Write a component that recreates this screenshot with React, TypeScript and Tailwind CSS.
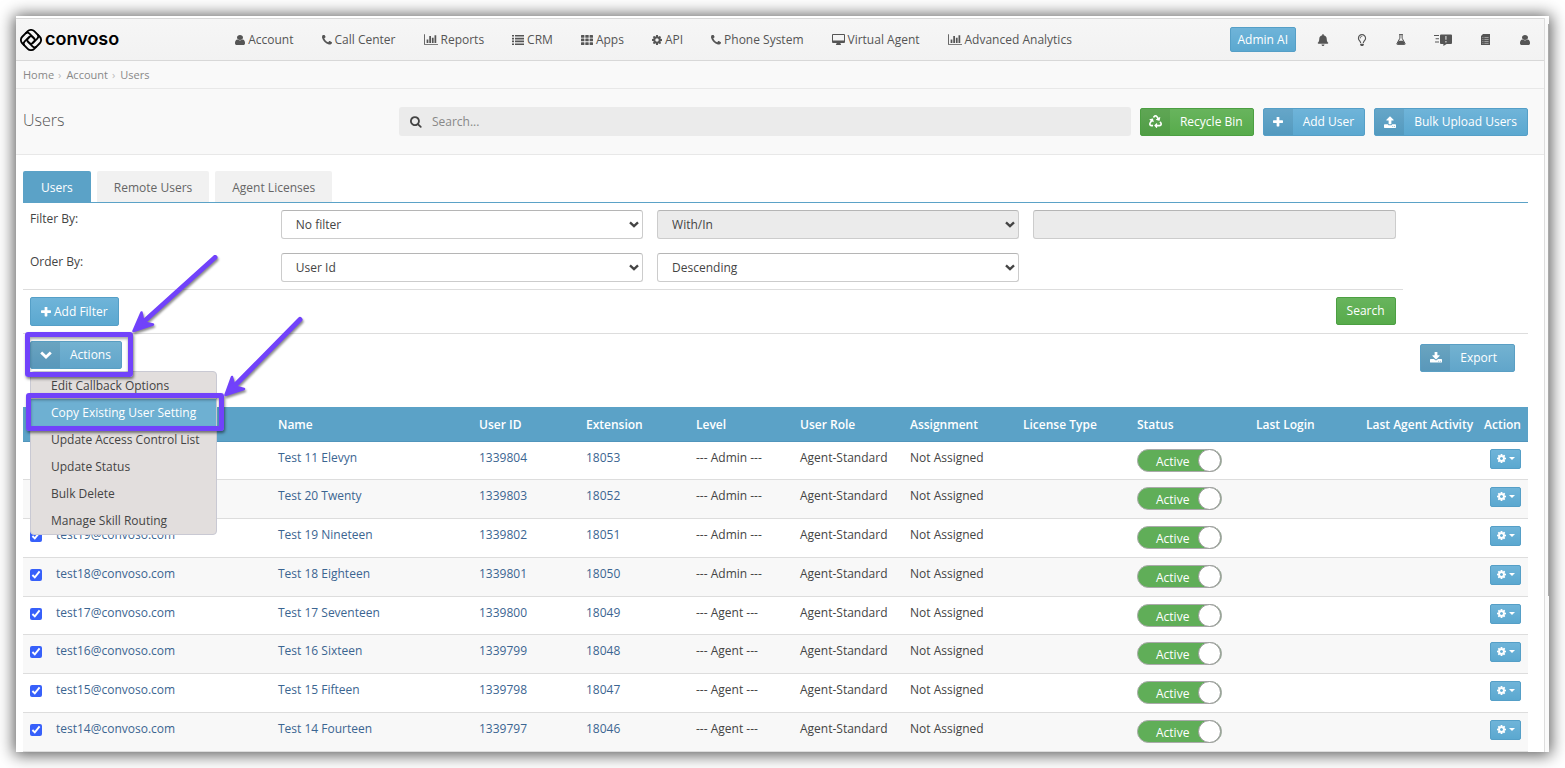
import type { ReactNode } from "react"
import { FaBell, FaRecycle, FaRegLightbulb } from "react-icons/fa"
import clsx from "clsx"

type IconProps = { className?: string }

const UserIcon = ({ className = "w-[10px] h-[10px]" }: IconProps) => (
    <svg viewBox="256 128 1280 1536" preserveAspectRatio="none" fill="currentColor" className={className}>
        <path d="M1536 1399q0 109-62.5 187t-150.5 78h-854q-88 0-150.5-78t-62.5-187q0-85 8.5-160.5t31.5-152 58.5-131 94-89 134.5-34.5q131 128 313 128t313-128q76 0 134.5 34.5t94 89 58.5 131 31.5 152 8.5 160.5zm-256-887q0 159-112.5 271.5t-271.5 112.5-271.5-112.5-112.5-271.5 112.5-271.5 271.5-112.5 271.5 112.5 112.5 271.5z" />
    </svg>
)

const PhoneIcon = () => (
    <svg viewBox="192 192 1408 1408" fill="currentColor" className="size-[10px]">
        <path d="M1600 1240q0 27-10 70.5t-21 68.5q-21 50-122 106-94 51-186 51-27 0-52.5-3.5t-57.5-12.5-47.5-14.5-55.5-20.5-49-18q-98-35-175-83-128-79-264.5-215.5t-215.5-264.5q-48-77-83-175-3-9-18-49t-20.5-55.5-14.5-47.5-12.5-57.5-3.5-52.5q0-92 51-186 56-101 106-122 25-11 68.5-21t70.5-10q14 0 21 3 18 6 53 76 11 19 30 54t35 63.5 31 53.5q3 4 17.5 25t21.5 35.5 7 28.5q0 20-28.5 50t-62 55-62 53-28.5 46q0 9 5 22.5t8.5 20.5 14 24 11.5 19q76 137 174 235t235 174q2 1 19 11.5t24 14 20.5 8.5 22.5 5q18 0 46-28.5t53-62 55-62 50-28.5q14 0 28.5 7t35.5 21.5 25 17.5q25 15 53.5 31t63.5 35 54 30q70 35 76 53 3 7 3 21z" />
    </svg>
)

const ChartIcon = () => (
    <svg viewBox="0 128 2048 1536" fill="currentColor" className="w-[14px] h-[11px]">
        <path d="M640 896v512h-256v-512h256zm384-512v1024h-256v-1024h256zm1024 1152v128h-2048v-1536h128v1408h1920zm-640-896v768h-256v-768h256zm384-384v1152h-256v-1152h256z" />
    </svg>
)

const ListIcon = () => (
    <svg viewBox="0 0 12 10" fill="currentColor" className="w-[12px] h-[10px]">
        <path d="M0 0h2v1.6h-2zM3 0h9v1.6h-9zM0 2.8h2v1.6h-2zM3 2.8h9v1.6h-9zM0 5.6h2v1.6h-2zM3 5.6h9v1.6h-9zM0 8.4h2v1.6h-2zM3 8.4h9v1.6h-9z" />
    </svg>
)

const GridIcon = () => (
    <svg viewBox="0 0 12 10" fill="currentColor" className="w-[12px] h-[10px]">
        {[0, 3.6, 7.2].map((y) =>
            [0, 4.3, 8.6].map((x) => <rect key={`${x}-${y}`} x={x} y={y} width="3.4" height="2.7" rx="0.5" />)
        )}
    </svg>
)

const CogIcon = ({ className = "size-[10px]" }: IconProps) => (
    <svg viewBox="128 128 1536 1536" fill="currentColor" className={className}>
        <path d="M1152 896q0-106-75-181t-181-75-181 75-75 181 75 181 181 75 181-75 75-181zm512-109v222q0 12-8 23t-20 13l-185 28q-19 54-39 91 35 50 107 138 10 12 10 25t-9 23q-27 37-99 108t-94 71q-12 0-26-9l-138-108q-44 23-91 38-16 136-29 186-7 28-36 28h-222q-14 0-24.5-8.5t-11.5-21.5l-28-184q-49-16-90-37l-141 107q-10 9-25 9-14 0-25-11-126-114-165-168-7-10-7-23 0-12 8-23 15-21 51-66.5t54-70.5q-27-50-41-99l-183-27q-13-2-21-12.5t-8-23.5v-222q0-12 8-23t19-13l186-28q14-46 39-92-40-57-107-138-10-12-10-24 0-10 9-23 26-36 98.5-107.5t94.5-71.5q13 0 26 10l138 107q44-23 91-38 16-136 29-186 7-28 36-28h222q14 0 24.5 8.5t11.5 21.5l28 184q49 16 90 37l142-107q9-9 24-9 13 0 25 10 129 119 165 170 7 8 7 22 0 12-8 23-15 21-51 66.5t-54 70.5q26 50 41 98l183 28q13 2 21 12.5t8 23.5z" />
    </svg>
)

const DesktopIcon = () => (
    <svg viewBox="0 0 13 11" fill="currentColor" className="w-[13px] h-[11px]">
        <path fillRule="evenodd" d="M1 0h11a1 1 0 0 1 1 1v7a1 1 0 0 1-1 1H8.5v1q.6.2.6 1H3.9q0-.8.6-1V9H1a1 1 0 0 1-1-1V1a1 1 0 0 1 1-1zM1 1v5.4h11V1z" />
    </svg>
)

const SearchIcon = () => (
    <svg viewBox="64 128 1664 1664" fill="currentColor" className="size-3">
        <path d="M1216 832q0-185-131.5-316.5t-316.5-131.5-316.5 131.5-131.5 316.5 131.5 316.5 316.5 131.5 316.5-131.5 131.5-316.5zm512 832q0 52-38 90t-90 38q-54 0-90-38l-343-342q-179 124-399 124-143 0-273.5-55.5t-225-150-150-225-55.5-273.5 55.5-273.5 150-225 225-150 273.5-55.5 273.5 55.5 225 150 150 225 55.5 273.5q0 220-124 399l343 343q37 37 37 90z" />
    </svg>
)

const PlusIcon = () => (
    <svg viewBox="192 192 1408 1408" fill="currentColor" className="size-[10px]">
        <path d="M1600 736v192q0 40-28 68t-68 28h-416v416q0 40-28 68t-68 28h-192q-40 0-68-28t-28-68v-416h-416q-40 0-68-28t-28-68v-192q0-40 28-68t68-28h416v-416q0-40 28-68t68-28h192q40 0 68 28t28 68v416h416q40 0 68 28t28 68z" />
    </svg>
)

const UploadIcon = () => (
    <svg viewBox="64 0 1664 1664" fill="currentColor" className="size-3">
        <path d="M1344 1472q0-26-19-45t-45-19-45 19-19 45 19 45 45 19 45-19 19-45zm256 0q0-26-19-45t-45-19-45 19-19 45 19 45 45 19 45-19 19-45zm128-224v320q0 40-28 68t-68 28h-1472q-40 0-68-28t-28-68v-320q0-40 28-68t68-28h427q21 56 70.5 92t110.5 36h256q61 0 110.5-36t70.5-92h427q40 0 68 28t28 68zm-325-648q-17 40-59 40h-256v448q0 26-19 45t-45 19h-256q-26 0-45-19t-19-45v-448h-256q-42 0-59-40-17-39 14-69l448-448q18-19 45-19t45 19l448 448q31 30 14 69z" />
    </svg>
)

const DownloadIcon = () => (
    <svg viewBox="64 128 1664 1536" fill="currentColor" className="size-3">
        <path d="M1344 1344q0-26-19-45t-45-19-45 19-19 45 19 45 45 19 45-19 19-45zm256 0q0-26-19-45t-45-19-45 19-19 45 19 45 45 19 45-19 19-45zm128-224v320q0 40-28 68t-68 28h-1472q-40 0-68-28t-28-68v-320q0-40 28-68t68-28h465l135 136q58 56 136 56t136-56l136-136h464q40 0 68 28t28 68zm-325-569q17 41-14 70l-448 448q-18 19-45 19t-45-19l-448-448q-31-29-14-70 17-39 59-39h256v-448q0-26 19-45t45-19h256q26 0 45 19t19 45v448h256q42 0 59 39z" />
    </svg>
)

const ChevronIcon = ({ className = "w-3 h-2" }: IconProps) => (
    <svg viewBox="0 0 12 8" fill="none" stroke="currentColor" strokeWidth="2.8" className={className}>
        <path d="M1.2 1.4 6 6l4.8-4.6" />
    </svg>
)

const FlaskIcon = () => (
    <svg viewBox="0 0 10 11" className="w-[10px] h-[11px]">
        <path d="M3.1.6h3.8M3.9.6v3.6L.9 9.6q-.3.8.6.8h7q.9 0 .6-.8L6.1 4.2V.6" fill="none" stroke="currentColor" />
        <path d="M2.6 6.8h4.8l1.6 3.4H1z" fill="currentColor" />
    </svg>
)

const FeedbackIcon = () => (
    <svg viewBox="0 0 18 12" className="w-[18px] h-[12px]">
        <path d="M0 1.5h5M1.6 4.7h3.4M1 8h4" stroke="currentColor" strokeWidth="1.1" />
        <path d="M7 .5h10q1 0 1 1v7.4q0 1-1 1h-4.4L9.4 12V9.9H7q-1 0-1-1V1.5q0-1 1-1z" fill="currentColor" />
        <path d="M11.900 2v3.800M11.900 7v1.500" stroke="#bbb" strokeWidth="1.500" />
    </svg>
)

const NotesIcon = () => (
    <svg viewBox="0 0 9 11" className="w-[9px] h-[11px]">
        <path d="M2 0h7v11H0V2z" fill="currentColor" />
        <path d="M1.400 3.500h1M1.400 5.500h1M1.400 7.500h1M1.400 9.400h1M3.400 3.500h4.200M3.400 5.500h4.200M3.400 7.500h4.200M3.400 9.400h4.200" stroke="#bbb" strokeWidth="0.7" />
    </svg>
)

const Logo = () => (
    <a href="#" className="flex items-center gap-[3px] text-black">
        <svg viewBox="-11 -11 22 22" fill="none" stroke="currentColor" strokeWidth="1.800" strokeLinecap="round" className="size-[22px]">
            <rect x="-8.500" y="-8.500" width="17" height="17" rx="4.600" transform="rotate(45)" />
            {[45, 135, 225, 315].map((angle) => (
                <path key={angle} d="M-8.500-1.200Q-8-3.400-5.500-3.400H1q2.200 0 2.200 2.200V1" transform={`rotate(${angle})`} />
            ))}
        </svg>
        <span className="pb-[2px] font-['Inter',sans-serif] text-lg leading-6 font-semibold">convoso</span>
    </a>
)

const navItems = [
    { label: "Account", icon: <UserIcon /> },
    { label: "Call Center", icon: <PhoneIcon /> },
    { label: "Reports", icon: <ChartIcon /> },
    { label: "CRM", icon: <ListIcon /> },
    { label: "Apps", icon: <GridIcon /> },
    { label: "API", icon: <CogIcon /> },
    { label: "Phone System", icon: <PhoneIcon /> },
    { label: "Virtual Agent", icon: <DesktopIcon /> },
    { label: "Advanced Analytics", icon: <ChartIcon /> },
]

const toolItems = [
    { label: "Notifications", icon: <FaBell className="size-3" /> },
    { label: "Tips", icon: <FaRegLightbulb className="size-3" /> },
    { label: "Labs", icon: <FlaskIcon /> },
    { label: "Feedback", icon: <FeedbackIcon />, wide: true },
    { label: "Notes", icon: <NotesIcon /> },
    { label: "Profile", icon: <UserIcon /> },
]

const actionItems = [
    "Edit Callback Options",
    "Copy Existing User Setting",
    "Update Access Control List",
    "Update Status",
    "Bulk Delete",
    "Manage Skill Routing",
]

const users = [
    { email: "", name: "Test 11 Elevyn", id: "1339804", ext: "18053", level: "Admin" },
    { email: "", name: "Test 20 Twenty", id: "1339803", ext: "18052", level: "Admin" },
    { email: "test19@convoso.com", name: "Test 19 Nineteen", id: "1339802", ext: "18051", level: "Admin" },
    { email: "test18@convoso.com", name: "Test 18 Eighteen", id: "1339801", ext: "18050", level: "Admin" },
    { email: "test17@convoso.com", name: "Test 17 Seventeen", id: "1339800", ext: "18049", level: "Agent" },
    { email: "test16@convoso.com", name: "Test 16 Sixteen", id: "1339799", ext: "18048", level: "Agent" },
    { email: "test15@convoso.com", name: "Test 15 Fifteen", id: "1339798", ext: "18047", level: "Agent" },
    { email: "test14@convoso.com", name: "Test 14 Fourteen", id: "1339797", ext: "18046", level: "Agent" },
]

const headings = [
    "Name",
    "User ID",
    "Extension",
    "Level",
    "User Role",
    "Assignment",
    "License Type",
    "Status",
    "Last Login",
    "Last Agent Activity",
    "Action",
]

const blue = "border-[#559fc7] bg-linear-to-b from-[#6fb4d9] to-[#5ba8d0]"
const mutedBlue = "border-[#5a9fc4] bg-linear-to-b from-[#73b2d1] to-[#61a5ca]"
const green = "border-[#4c9f42] bg-linear-to-b from-[#68b45d] to-[#57ab4b]"

function LabeledButton({ icon, tone, className = "pr-[10px]", children }: {
    icon: ReactNode
    tone: string
    className?: string
    children: ReactNode
}) {
    return (
        <button className={clsx("flex h-7 items-stretch rounded-xs border text-white", tone, className)}>
            <span className="mr-[10px] flex w-[29px] items-center justify-center bg-black/8">{icon}</span>
            <span className="self-center whitespace-nowrap">{children}</span>
        </button>
    )
}

function SelectBox({ label, value, disabled }: { label: string; value: string; disabled?: boolean }) {
    return (
        <div className="relative col-span-3 mx-[7px]">
            <select
                aria-label={label}
                disabled={disabled}
                className={clsx(
                    "block h-[29px] w-full appearance-none rounded-[3px] border border-[#ccc] border-t-[#b5b5b5] px-[14px] text-[#444] opacity-100",
                    disabled ? "bg-[#ebebeb]" : "bg-white"
                )}
            >
                <option>{value}</option>
            </select>
            <ChevronIcon className="pointer-events-none absolute top-[11px] right-1 h-[7px] w-[10px] text-[#444]" />
        </div>
    )
}

function Header() {
    return (
        <header className="flex h-[43px] items-center border-y border-[#d8d8d8] bg-linear-to-b from-[#f6f6f6] to-[#f2f2f2] pl-1 text-[#555]">
            <Logo />
            <nav className="ml-[116px] flex gap-7">
                {navItems.map((item) => (
                    <a key={item.label} href="#" className="flex items-center gap-[3px] whitespace-nowrap">
                        {item.icon}
                        {item.label}
                    </a>
                ))}
            </nav>
            <button className={clsx("mr-[7px] ml-auto h-[25px] rounded-xs border px-[7px] text-white", blue)}>
                Admin AI
            </button>
            <div className="flex">
                {toolItems.map((item) => (
                    <button
                        key={item.label}
                        aria-label={item.label}
                        className={clsx("flex items-center justify-center", item.wide ? "w-[46px]" : "w-[39px]")}
                    >
                        {item.icon}
                    </button>
                ))}
            </div>
        </header>
    )
}

function PageTitle() {
    return (
        <div className="flex items-center gap-[9px] border-b border-[#e8e8e8] bg-[#f9f9f9] py-[18px] pr-4 pl-[7px]">
            <h1 className="-mr-[9px] w-1/4 pb-1 text-base leading-6 font-light text-[#555]">Users</h1>
            <label className="flex h-[29px] flex-1 items-center gap-[10px] rounded-[3px] bg-[#ebebeb] px-[11px] text-[#444]">
                <SearchIcon />
                <input
                    aria-label="Search"
                    placeholder="Search..."
                    className="w-full bg-transparent outline-none placeholder:text-[#888]"
                />
            </label>
            <LabeledButton tone={green} icon={<FaRecycle className="size-[13px]" />}>Recycle Bin</LabeledButton>
            <LabeledButton tone={blue} icon={<PlusIcon />}>Add User</LabeledButton>
            <LabeledButton tone={blue} icon={<UploadIcon />}>Bulk Upload Users</LabeledButton>
        </div>
    )
}

function Tabs() {
    return (
        <div className="flex gap-[6px] border-b border-b-[#5ba2c7]">
            <button className="h-[31px] rounded-t-xs bg-[#5ba2c7] px-[18px] pt-[2px] font-medium text-white">Users</button>
            <button className="h-[31px] rounded-t-xs bg-[#f1f1f1] px-[17px] pt-[2px] text-[#666]">Remote Users</button>
            <button className="h-[31px] rounded-t-xs bg-[#f1f1f1] px-[17px] pt-[2px] text-[#666]">Agent Licenses</button>
        </div>
    )
}

function Filters() {
    return (
        <form className="border-b border-[#ddd]">
            <div className="w-11/12">
                <div className="grid grid-cols-11 gap-y-[14px] border-b border-[#ddd] py-[7px]">
                    <span className="col-span-2 pl-[7px]">Filter By:</span>
                    <SelectBox label="Filter By" value="No filter" />
                    <SelectBox label="Filter condition" value="With/In" disabled />
                    <input
                        aria-label="Filter value"
                        disabled
                        className="col-span-3 mx-[7px] h-[29px] min-w-0 rounded-[3px] border border-[#ccc] border-t-[#b5b5b5] bg-[#ebebeb]"
                    />
                    <span className="col-span-2 pl-[7px]">Order By:</span>
                    <SelectBox label="Order By" value="User Id" />
                    <SelectBox label="Order direction" value="Descending" />
                </div>
                <div className="flex justify-between p-[7px]">
                    <button type="button" className={clsx("flex h-[29px] items-center gap-[3px] rounded-xs border px-[10px] text-white", blue)}>
                        <PlusIcon />
                        Add Filter
                    </button>
                    <button type="button" className={clsx("h-7 rounded-xs border px-[10px] text-white", green)}>Search</button>
                </div>
            </div>
        </form>
    )
}

const arrowShadow = "drop-shadow-[1px_2px_1px_rgba(0,0,0,0.45)]"

function ActionsMenu() {
    return (
        <div className="relative">
            <LabeledButton tone={mutedBlue} icon={<ChevronIcon />}>Actions</LabeledButton>
            <div className="absolute top-[30px] left-0 z-10 w-[187px] rounded-sm border border-[#c9c9d3] bg-[#e2dedd]">
                <ul>
                    {actionItems.map((item) => (
                        <li key={item}>
                            <a
                                href="#"
                                className={clsx(
                                    "block h-[27px] pl-5 leading-[27px] whitespace-nowrap",
                                    item === "Copy Existing User Setting" ? "bg-[#6eb0d2] text-white" : "text-[#444]"
                                )}
                            >
                                {item}
                            </a>
                        </li>
                    ))}
                </ul>
            </div>

            {/* Callouts */}
            <div className="absolute -top-[9px] -left-[5px] z-20 h-[45px] w-[108px] rounded-[3px] border-[5px] border-[#7142fb] shadow-[1px_2px_3px_rgba(0,0,0,0.5),inset_0_2px_3px_rgba(0,0,0,0.35)]" />
            <div className="absolute top-[52px] -left-1 z-20 h-[38px] w-[198px] rounded-[3px] border-[5px] border-[#7142fb] shadow-[1px_2px_3px_rgba(0,0,0,0.5),inset_0_2px_3px_rgba(0,0,0,0.35)]" />
            <svg
                viewBox="0 0 190 160"
                className={clsx("pointer-events-none absolute -top-[91px] left-[95px] z-20 h-[160px] w-[190px]", arrowShadow)}
                fill="#7142fb"
                stroke="#7142fb"
                strokeLinejoin="round"
                strokeLinecap="round"
            >
                <path d="M90 7.500 14 76" strokeWidth="5" />
                <path d="M8.500 81 16.500 62.500 18.500 72.500 28 74.500z" strokeWidth="2.500" />
                <path d="M175 69.500 106 139.500" strokeWidth="5" />
                <path d="M100.500 145 107 127 109.500 136.500 119 139z" strokeWidth="2.500" />
            </svg>
        </div>
    )
}

function StatusToggle({ name }: { name: string }) {
    return (
        <label className="relative flex h-[23px] w-[85px] items-center rounded-full border border-[#aaa] bg-[#60ae58] pt-[3px] pl-[18px] text-white">
            <input type="checkbox" role="switch" defaultChecked aria-label={`Status of ${name}`} className="sr-only" />
            Active
            <span className="absolute top-0 right-0 size-[23px] -translate-y-px rounded-full border border-[#999] bg-white" />
        </label>
    )
}

function UsersTable() {
    return (
        <table className="w-full table-fixed text-left">
            <colgroup>
                <col className="w-[25px]" />
                <col className="w-[222px]" />
                <col className="w-[201px]" />
                <col className="w-[107px]" />
                <col className="w-[110px]" />
                <col className="w-[104px]" />
                <col className="w-[110px]" />
                <col className="w-[113px]" />
                <col className="w-[114px]" />
                <col className="w-[119px]" />
                <col className="w-[110px]" />
                <col className="w-[119px]" />
                <col className="w-[51px]" />
            </colgroup>
            <thead>
                <tr className="h-[34px] border-b border-[#5195bc] bg-[#5ba2c7] text-white">
                    <td />
                    <td />
                    {headings.map((heading) => (
                        <th key={heading} className="pt-[3px] pl-2 font-semibold whitespace-nowrap last:pl-[7px]">{heading}</th>
                    ))}
                </tr>
            </thead>
            <tbody className="[&_td]:pt-[7px] [&_td]:pl-2 [&_td]:align-top">
                {users.map((user) => (
                    <tr key={user.id} className="h-[39px] border-b border-[#ddd] even:bg-[#f8f8f8] nth-[4n+1]:h-[38px]">
                        <td>
                            <input
                                type="checkbox"
                                defaultChecked
                                aria-label={`Select ${user.name}`}
                                className="mt-1 -ml-px block size-3 accent-[#3760fa]"
                            />
                        </td>
                        <td><a href="#" className="text-[#3b6591]">{user.email}</a></td>
                        <td><a href="#" className="text-[#3b6591]">{user.name}</a></td>
                        <td><a href="#" className="text-[#3b6591]">{user.id}</a></td>
                        <td><a href="#" className="text-[#3b6591]">{user.ext}</a></td>
                        <td>--- {user.level} ---</td>
                        <td>Agent-Standard</td>
                        <td>Not Assigned</td>
                        <td />
                        <td><StatusToggle name={user.name} /></td>
                        <td />
                        <td />
                        <td>
                            <button
                                aria-label={`Actions for ${user.name}`}
                                className={clsx("ml-[5px] flex h-5 w-[31px] items-center justify-center gap-[3px] rounded-xs border text-white", blue)}
                            >
                                <CogIcon className="size-[9px]" />
                                <svg viewBox="0 0 6 3" fill="currentColor" className="h-[3px] w-[6px]"><path d="M0 0h6L3 3z" /></svg>
                            </button>
                        </td>
                    </tr>
                ))}
            </tbody>
        </table>
    )
}

export default function App() {
    return (
        <div className="min-h-screen bg-white p-4 font-['Open_Sans',sans-serif] text-xs leading-[18px] text-[#444]">
            <div className="flex bg-white pt-[2px] shadow-[0_1px_15px_2px_rgba(0,0,0,0.65)]">
                <div className="min-w-0 flex-1">
                    <Header />

                    {/* Breadcrumbs */}
                    <nav className="flex h-7 items-center gap-1 border-b border-[#e8e8e8] bg-[#f9f9f9] pl-[7px] text-[11px] text-[#888]">
                        <a href="#">Home</a>
                        <span className="pr-px text-[#bbb]">›</span>
                        <a href="#">Account</a>
                        <span className="pr-px text-[#bbb]">›</span>
                        <a href="#">Users</a>
                    </nav>

                    <PageTitle />

                    <main className="pt-4 pr-4 pl-[7px]">
                        <Tabs />
                        <Filters />
                        <div className="flex h-[73px] items-start justify-between pt-[7px] pr-[13px] pl-[7px]">
                            <ActionsMenu />
                            <LabeledButton tone={mutedBlue} className="mt-[3px] pr-[17px]" icon={<DownloadIcon />}>Export</LabeledButton>
                        </div>
                        <UsersTable />
                    </main>
                </div>

                {/* Scroll track */}
                <div className="flex w-[5px] justify-end border-l border-[#ddd] bg-[#fafafa]">
                    <div className="mt-[6px] h-[78%] w-px bg-[#aaa]" />
                </div>
            </div>
        </div>
    )
}
